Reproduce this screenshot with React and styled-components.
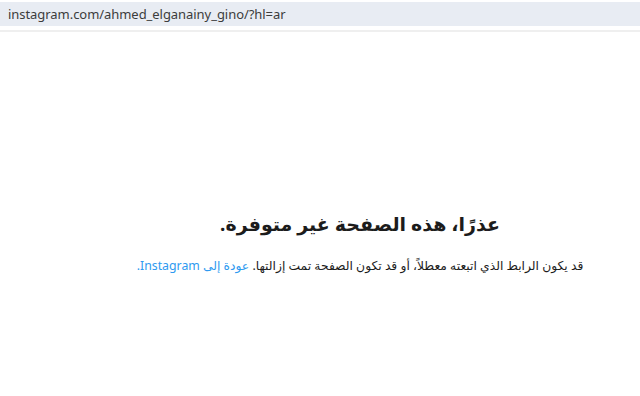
import React from 'react';
import styled, { createGlobalStyle } from 'styled-components';

const Global = createGlobalStyle`
  html, body { margin: 0; padding: 0; background: #fff; }
  body { width: 640px; height: 396px; overflow: hidden; }
`;

const Page = styled.div`
  display: flex;
  flex-direction: column;
  height: 396px;
  font-family: "Noto Sans", "DejaVu Sans", sans-serif;
`;

const AddressBar = styled.div`
  margin-top: 2px;
  height: 24px;
  background: #e8ecf3;
  display: flex;
  align-items: center;
  padding-left: 8px;
  font-size: 13px;
  color: #3c3c3c;
  letter-spacing: -0.05px;
`;

const Divider = styled.div`
  margin-top: 4px;
  height: 2px;
  background: #efefef;
`;

const Main = styled.main`
  flex: 1;
  display: flex;
  flex-direction: column;
  align-items: center;
  padding-left: 80px;
  padding-top: 178px;
  direction: rtl;
`;

const Title = styled.h2`
  margin: 0;
  font-size: 19px;
  font-weight: 700;
  color: #1c1c1c;
  line-height: 28px;
`;

const Message = styled.p`
  margin: 18px 0 0;
  font-size: 12.3px;
  color: #1c1c1c;
  line-height: 20px;
`;

const Link = styled.a`
  color: #2e9af0;
  text-decoration: none;
`;

export default function App() {
  return (
    <Page>
      <Global />
      <AddressBar>instagram.com/ahmed_elganainy_gino/?hl=ar</AddressBar>
      <Divider />
      <Main>
        <Title>عذرًا، هذه الصفحة غير متوفرة.</Title>
        <Message>
          قد يكون الرابط الذي اتبعته معطلاً، أو قد تكون الصفحة تمت إزالتها.{' '}
          <Link href="#">عودة إلى Instagram.</Link>
        </Message>
      </Main>
    </Page>
  );
}
